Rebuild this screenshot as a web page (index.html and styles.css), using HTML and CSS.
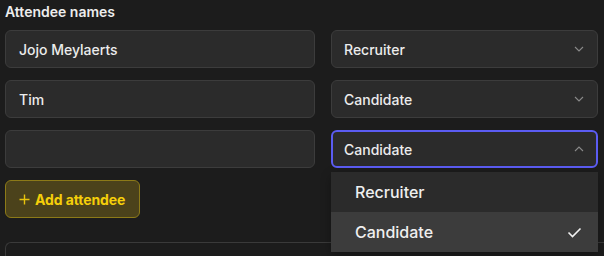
FILE: index.html
```html
<!DOCTYPE html>
<html>
<head>
<meta charset="utf-8">
<link rel="stylesheet" href="styles.css">
</head>
<body>
<div class="page">
  <div class="label">Attendee names</div>
  <div class="rows">
    <div class="field">Jojo Meylaerts</div>
    <div class="select">
      <span>Recruiter</span>
      <svg class="chev" width="10" height="6" viewBox="0 0 10 6"><path d="M1 1l4 4 4-4" fill="none" stroke="#8a8a8a" stroke-width="1.1"/></svg>
    </div>
    <div class="field">Tim</div>
    <div class="select">
      <span>Candidate</span>
      <svg class="chev" width="10" height="6" viewBox="0 0 10 6"><path d="M1 1l4 4 4-4" fill="none" stroke="#8a8a8a" stroke-width="1.1"/></svg>
    </div>
    <div class="field"></div>
    <div class="select-wrap">
      <div class="select open">
        <span>Candidate</span>
        <svg class="chev" width="10" height="6" viewBox="0 0 10 6"><path d="M1 5l4-4 4 4" fill="none" stroke="#8a8a8a" stroke-width="1.1"/></svg>
      </div>
      <div class="menu">
        <div class="option">Recruiter</div>
        <div class="option active">Candidate
          <svg width="15" height="11" viewBox="0 0 15 11"><path d="M1.5 5.5l4 4 8-8" fill="none" stroke="#f0f0f0" stroke-width="1.6"/></svg>
        </div>
      </div>
    </div>
  </div>
  <button class="add"><svg class="plus" width="11" height="11" viewBox="0 0 11 11"><path d="M5.5 0.5v10M0.5 5.5h10" stroke="#e8c40c" stroke-width="1.4" fill="none"/></svg>Add attendee</button>
  <div class="box"></div>
</div>
</body>
</html>
```
FILE: styles.css
```css
html, body {
  margin: 0;
  background: #1c1c1c;
  overflow: hidden;
}
body {
  width: 604px;
  height: 256px;
  font-family: Inter, "Liberation Sans", sans-serif;
  color: #ececec;
}
.page {
  padding: 3px 0 0 5px;
}
.label {
  font-size: 14px;
  font-weight: 600;
  line-height: 17px;
  color: #ededed;
  margin-bottom: 10px;
}
.rows {
  display: grid;
  grid-template-columns: 310px 267px;
  column-gap: 16px;
  row-gap: 12px;
}
.field, .select {
  box-sizing: border-box;
  height: 38px;
  background: #2b2b2b;
  border: 1px solid #3c3c3c;
  border-radius: 6px;
  font-size: 14px;
  font-weight: 500;
  display: flex;
  align-items: center;
  color: #ececec;
}
.field {
  padding-left: 13px;
}
.select {
  padding: 0 13px 0 12px;
  justify-content: space-between;
}
.select-wrap {
  position: relative;
}
.select.open {
  border: 2px solid #5b5cf2;
  padding: 0 12px 0 11px;
}
.menu {
  position: absolute;
  top: 42px;
  left: 0;
  right: 0;
  background: #2b2b2b;
  z-index: 2;
  box-shadow: 0 4px 10px rgba(0,0,0,0.3);
}
.option {
  height: 40px;
  display: flex;
  align-items: center;
  justify-content: space-between;
  padding: 0 16px 0 24px;
  font-size: 16px;
  font-weight: 500;
  color: #efefef;
}
.option.active {
  background: #3c3c3c;
}
.add {
  margin-top: 12px;
  box-sizing: border-box;
  height: 38px;
  padding: 0 14px 0 13px;
  background: #4b421b;
  border: 1px solid #8c7a18;
  border-radius: 6px;
  color: #f5cf0a;
  font-family: Inter, "Liberation Sans", sans-serif;
  font-size: 14px;
  font-weight: 700;
  letter-spacing: -0.1px;
  display: flex;
  align-items: center;
}
.plus {
  margin-right: 5px;
}
.box {
  margin-top: 24px;
  box-sizing: border-box;
  width: 599px;
  height: 14px;
  border: 1px solid #3a3a3a;
  border-right: none;
  border-bottom: none;
  border-radius: 6px 0 0 0;
  background: #1c1c1c;
}
```
